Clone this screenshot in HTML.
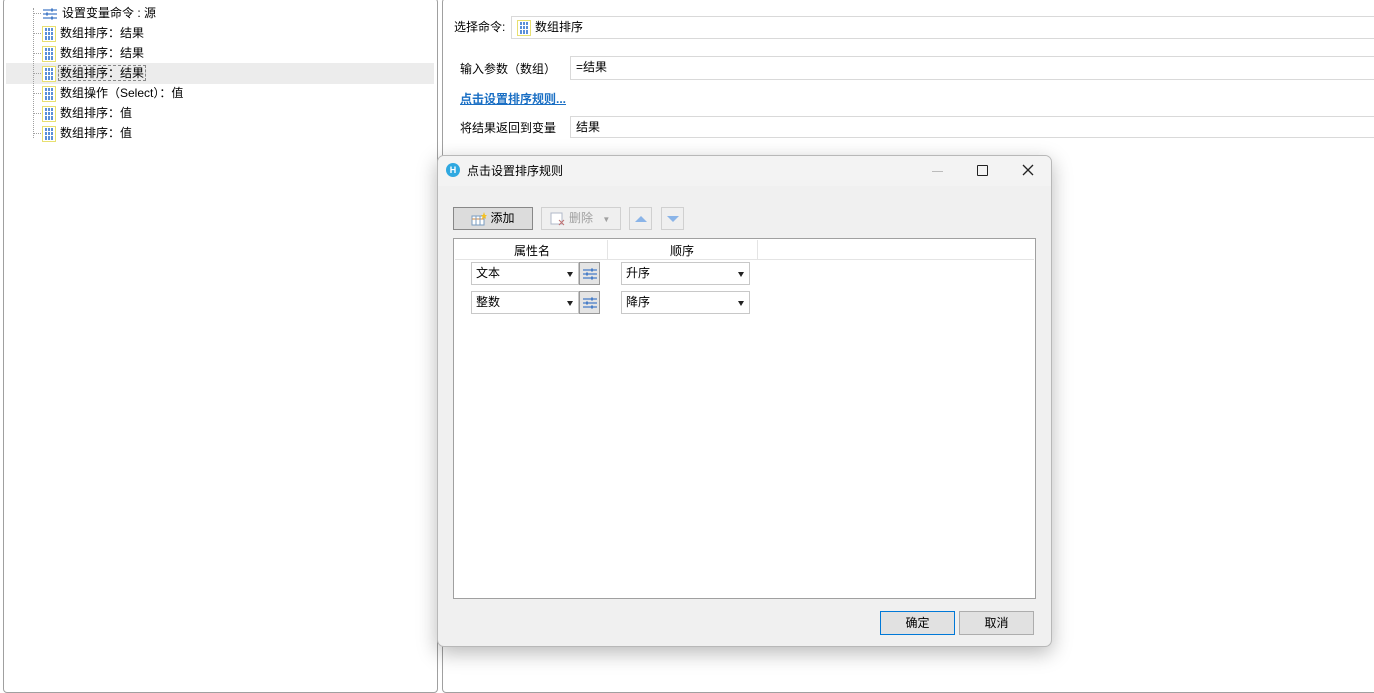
<!DOCTYPE html>
<html><head><meta charset="utf-8"><style>
*{box-sizing:border-box;margin:0;padding:0}
body{width:1374px;height:691px;background:#fff;font-family:"Liberation Sans","Noto Sans CJK SC",sans-serif;font-size:12px;color:#000;position:relative;overflow:hidden}
.abs{position:absolute}
.ti{position:absolute;left:42px;height:20px;line-height:20px;white-space:nowrap}
.ti svg{vertical-align:middle;margin-right:4px}
.inp{position:absolute;border:1px solid #d9d9d9;background:#fff;height:22px;line-height:20px;padding-left:5px}
.btn{position:absolute;border:1px solid #adadad;background:#e1e1e1;text-align:center;line-height:20px}
.cb{position:absolute;border:1px solid #c8c8c8;background:#fff;height:23px;line-height:21px;padding-left:4px}
.cb:after{content:"";position:absolute;right:5px;top:9px;border-left:3.5px solid transparent;border-right:3.5px solid transparent;border-top:5px solid #222}
.eb{position:absolute;width:21px;height:23px;border:1px solid #999;background:#e4e4e4}
</style></head><body>
<svg width="0" height="0" style="position:absolute"><defs>
<g id="arr"><rect x="0.5" y="0.5" width="13" height="15" fill="#fff" stroke="#e8e070"/><g fill="#5a8fd8"><rect x="3" y="2" width="2" height="12"/><rect x="6" y="2" width="2" height="12"/><rect x="9" y="2" width="2" height="12"/></g><g fill="#fff"><rect x="2" y="5" width="10" height="1"/><rect x="2" y="9" width="10" height="1"/></g></g>
<g id="sl"><g stroke="#4a7fc8" stroke-width="1.3"><line x1="1" y1="4" x2="15" y2="4"/><line x1="1" y1="8" x2="15" y2="8"/><line x1="1" y1="12" x2="15" y2="12"/></g><g fill="#4a7fc8"><rect x="9" y="2.5" width="2" height="3"/><rect x="4" y="6.5" width="2" height="3"/><rect x="9" y="10.5" width="2" height="3"/></g></g>
</defs></svg>

<div class="abs" style="left:3px;top:-2px;width:435px;height:695px;border:1px solid #a0a0a0;border-radius:4px"></div>
<div class="abs" style="left:6px;top:63px;width:428px;height:21px;background:#ececec"></div>
<div class="abs" style="left:33px;top:8px;width:0;height:130px;border-left:1px dotted #a0a0a0"></div>
<div class="abs" style="left:33px;top:13px;width:8px;border-top:1px dotted #a0a0a0"></div>
<div class="abs" style="left:33px;top:33px;width:8px;border-top:1px dotted #a0a0a0"></div>
<div class="abs" style="left:33px;top:53px;width:8px;border-top:1px dotted #a0a0a0"></div>
<div class="abs" style="left:33px;top:73px;width:8px;border-top:1px dotted #a0a0a0"></div>
<div class="abs" style="left:33px;top:93px;width:8px;border-top:1px dotted #a0a0a0"></div>
<div class="abs" style="left:33px;top:113px;width:8px;border-top:1px dotted #a0a0a0"></div>
<div class="abs" style="left:33px;top:133px;width:8px;border-top:1px dotted #a0a0a0"></div>
<div class="ti" style="top:3px"><svg width="16" height="16"><use href="#sl"/></svg>设置变量命令 : 源</div>
<div class="ti" style="top:23px"><svg width="14" height="16"><use href="#arr"/></svg>数组排序：结果</div>
<div class="ti" style="top:43px"><svg width="14" height="16"><use href="#arr"/></svg>数组排序：结果</div>
<div class="ti" style="top:63px"><svg width="14" height="16"><use href="#arr"/></svg><span style="border:1px dashed #888;padding:0 1px;margin-left:-2px">数组排序：结果</span></div>
<div class="ti" style="top:83px"><svg width="14" height="16"><use href="#arr"/></svg>数组操作（Select）：值</div>
<div class="ti" style="top:103px"><svg width="14" height="16"><use href="#arr"/></svg>数组排序：值</div>
<div class="ti" style="top:123px"><svg width="14" height="16"><use href="#arr"/></svg>数组排序：值</div>

<div class="abs" style="left:442px;top:-2px;width:940px;height:695px;border:1px solid #a0a0a0;border-radius:4px"></div>
<div class="abs" style="left:454px;top:18px">选择命令:</div>
<div class="inp" style="left:511px;top:16px;width:870px;height:23px"><svg width="14" height="16" style="vertical-align:middle;margin-right:4px"><use href="#arr"/></svg>数组排序</div>
<div class="abs" style="left:460px;top:60px">输入参数（数组）</div>
<div class="inp" style="left:570px;top:56px;width:810px;height:24px">=结果</div>
<div class="abs" style="left:460px;top:90px;color:#1a6fc4;font-weight:bold;text-decoration:underline">点击设置排序规则...</div>
<div class="abs" style="left:460px;top:119px">将结果返回到变量</div>
<div class="inp" style="left:570px;top:116px;width:810px;height:22px">结果</div>

<div class="abs" style="left:437px;top:155px;width:615px;height:492px;background:#f0f0f0;border:1px solid #b8b8b8;border-radius:7px;box-shadow:0 6px 20px rgba(0,0,0,.28);overflow:hidden">
 <div class="abs" style="left:0;top:0;width:615px;height:30px;background:#f3f3f3"></div>
 <div class="abs" style="left:8px;top:7px;width:14px;height:14px;border-radius:7px;background:#2fa8e0;color:#fff;font-size:9px;line-height:14px;text-align:center;font-weight:bold">H</div>
 <div class="abs" style="left:29px;top:6px">点击设置排序规则</div>
 <div class="abs" style="left:494px;top:15px;width:11px;border-top:1px solid #bbb"></div>
 <div class="abs" style="left:539px;top:9px;width:11px;height:11px;border:1.3px solid #222;border-radius:1px"></div>
 <svg class="abs" style="left:584px;top:8px" width="12" height="12"><path d="M1 1L11 11M11 1L1 11" stroke="#222" stroke-width="1.3"/></svg>

 <div class="btn" style="left:15px;top:51px;width:80px;height:23px;background:#dcdcdc;border-color:#888"><svg width="16" height="14" style="vertical-align:middle;margin-right:3px"><rect x="1" y="4" width="12" height="9" fill="#fff" stroke="#7a9cc0"/><line x1="1" y1="7" x2="13" y2="7" stroke="#d08a40"/><line x1="5" y1="4" x2="5" y2="13" stroke="#7a9cc0"/><line x1="9" y1="4" x2="9" y2="13" stroke="#7a9cc0"/><path d="M13 0L14 3L16 3L14.5 4.5L15 7L13 5.5L11 7L11.5 4.5L10 3L12 3Z" fill="#f4c020"/></svg>添加</div>
 <div class="btn" style="left:103px;top:51px;width:80px;height:23px;background:#efefef;border-color:#d0d0d0;color:#a0a0a0;text-align:left;padding-left:8px"><svg width="16" height="14" style="vertical-align:middle;margin-right:3px"><rect x="1" y="1" width="11" height="11" fill="#fff" stroke="#b0b8c8"/><path d="M9 8L14 13M14 8L9 13" stroke="#c07070"/></svg>删除 <span style="font-size:8px;margin-left:6px">▼</span></div>
 <div class="btn" style="left:191px;top:51px;width:23px;height:23px;background:#efefef;border-color:#d0d0d0"><svg width="14" height="10" style="margin-top:6px"><path d="M1 8L7 2L13 8Z" fill="#8ab4e8"/></svg></div>
 <div class="btn" style="left:223px;top:51px;width:23px;height:23px;background:#efefef;border-color:#d0d0d0"><svg width="14" height="10" style="margin-top:6px"><path d="M1 2L7 8L13 2Z" fill="#8ab4e8"/></svg></div>

 <div class="abs" style="left:15px;top:82px;width:583px;height:361px;background:#fff;border:1px solid #a0a0a0">
  <div class="abs" style="left:1px;top:1px;width:579px;height:20px;border-bottom:1px solid #e4e4e4"></div>
  <div class="abs" style="left:153px;top:1px;height:20px;border-left:1px solid #e4e4e4"></div>
  <div class="abs" style="left:303px;top:1px;height:20px;border-left:1px solid #e4e4e4"></div>
  <div class="abs" style="left:60px;top:3px">属性名</div>
  <div class="abs" style="left:216px;top:3px">顺序</div>
  <div class="cb" style="left:17px;top:23px;width:108px">文本</div>
  <div class="eb" style="left:125px;top:23px"><svg width="16" height="16" style="margin:3px 0 0 2px"><use href="#sl"/></svg></div>
  <div class="cb" style="left:167px;top:23px;width:129px">升序</div>
  <div class="cb" style="left:17px;top:52px;width:108px">整数</div>
  <div class="eb" style="left:125px;top:52px"><svg width="16" height="16" style="margin:3px 0 0 2px"><use href="#sl"/></svg></div>
  <div class="cb" style="left:167px;top:52px;width:129px">降序</div>
 </div>
 <div class="btn" style="left:442px;top:455px;width:75px;height:24px;border:1px solid #0078d7;line-height:22px">确定</div>
 <div class="btn" style="left:521px;top:455px;width:75px;height:24px;line-height:22px">取消</div>
</div>
</body></html>
